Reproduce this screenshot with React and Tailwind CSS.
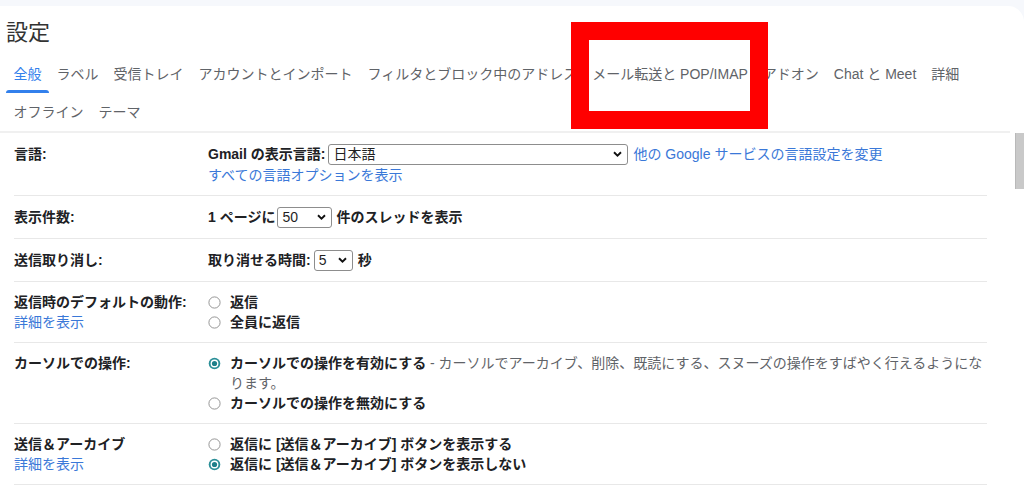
import React from 'react';

const tabs = [
  'ラベル',
  '受信トレイ',
  'アカウントとインポート',
  'フィルタとブロック中のアドレス',
  'メール転送と POP/IMAP',
  'アドオン',
  'Chat と Meet',
  '詳細',
  'オフライン',
  'テーマ',
];

const Select = ({ value, width }) => (
  <div
    className={`flex items-center justify-between h-[21px] border border-[#8d8d8d] rounded-[3px] pl-[4px] pr-[5px] bg-white font-normal text-[#1f1f1f] ${width}`}
  >
    <span className="leading-[19px]">{value}</span>
    <svg width="9" height="6" viewBox="0 0 9 6">
      <path d="M1 1.2l3.5 3.4L8 1.2" stroke="#111" strokeWidth="1.9" fill="none" />
    </svg>
  </div>
);

const Radio = ({ checked }) => (
  <svg width="13" height="13" viewBox="0 0 13 13" className="shrink-0">
    {checked ? (
      <>
        <circle cx="6.5" cy="6.5" r="5.8" fill="#2b8f98" />
        <circle cx="6.5" cy="6.5" r="3.9" fill="#fff" />
        <circle cx="6.5" cy="6.5" r="2.6" fill="#1d7f89" />
      </>
    ) : (
      <circle cx="6.5" cy="6.5" r="5.6" fill="#fff" stroke="#8a8a8a" strokeWidth="0.9" />
    )}
  </svg>
);

const Option = ({ checked, children }) => (
  <div className="flex items-center h-[20px]">
    <Radio checked={checked} />
    <span className="ml-[9px] font-bold text-[#202124] whitespace-nowrap">{children}</span>
  </div>
);

const Row = ({ label, labelLead = 'leading-[20px]', children }) => (
  <div className="flex ml-[14px] w-[973px] py-[10px] border-b border-[#e8e8e8]">
    <div className={`w-[194px] shrink-0 font-bold text-[#202124] ${labelLead}`}>{label}</div>
    <div className="flex-1 leading-[20px]">{children}</div>
  </div>
);

const Link = ({ children }) => <span className="text-[#3a78d8]">{children}</span>;

export default function App() {
  return (
    <div className="relative w-[1024px] h-[486px] overflow-hidden bg-[#f6f8fc] text-[14px] font-['Liberation_Sans','Noto_Sans_CJK_JP',sans-serif]">
      <div className="mt-[6px] h-[480px] bg-white rounded-tr-[16px] overflow-hidden">
        {/* title */}
        <div className="h-[49px] pl-[6px] pt-[13px] text-[22px] leading-[28px] text-[#333]">設定</div>

        {/* tabs */}
        <div className="flex flex-wrap w-[1000px] pl-[6px]">
          <div className="relative h-[38px] px-[7.5px] flex items-center text-[#3280ec]">
            全般
            <div className="absolute left-0 right-0 bottom-0 h-[3px] rounded-t-[3px] bg-[#3280ec]" />
          </div>
          {tabs.map((t) => (
            <div key={t} className="h-[38px] px-[7.5px] flex items-center text-[#5f6368] whitespace-nowrap">
              {t}
            </div>
          ))}
        </div>
        <div className="w-[1010px] h-[2px] bg-[#f0f0f0]" />

        {/* settings */}
        <Row label="言語:" labelLead="leading-[22px]">
          <div className="flex items-center h-[22px]">
            <span className="font-bold text-[#202124]">Gmail の表示言語:</span>
            <div className="ml-[3px]">
              <Select value="日本語" width="w-[300px]" />
            </div>
            <span className="ml-[5px]">
              <Link>他の Google サービスの言語設定を変更</Link>
            </span>
          </div>
          <Link>すべての言語オプションを表示</Link>
        </Row>

        <Row label="表示件数:" labelLead="leading-[22px]">
          <div className="flex items-center h-[22px] font-bold text-[#202124]">
            <span>1 ページに</span>
            <div className="ml-[2px]">
              <Select value="50" width="w-[55px]" />
            </div>
            <span className="ml-[4px]">件のスレッドを表示</span>
          </div>
        </Row>

        <Row label="送信取り消し:" labelLead="leading-[22px]">
          <div className="flex items-center h-[22px] font-bold text-[#202124]">
            <span>取り消せる時間:</span>
            <div className="ml-[3px]">
              <Select value="5" width="w-[39px]" />
            </div>
            <span className="ml-[5px]">秒</span>
          </div>
        </Row>

        <Row
          label={
            <>
              <div>返信時のデフォルトの動作:</div>
              <div className="font-normal">
                <Link>詳細を表示</Link>
              </div>
            </>
          }
        >
          <Option>返信</Option>
          <Option>全員に返信</Option>
        </Row>

        <Row label="カーソルでの操作:">
          <div className="flex items-start">
            <div className="h-[20px] flex items-center">
              <Radio checked />
            </div>
            <div className="ml-[9px] text-[#5f6368]">
              <div className="whitespace-nowrap">
                <span className="font-bold text-[#202124]">カーソルでの操作を有効にする</span> -
                カーソルでアーカイブ、削除、既読にする、スヌーズの操作をすばやく行えるようにな
              </div>
              <div>ります。</div>
            </div>
          </div>
          <Option>カーソルでの操作を無効にする</Option>
        </Row>

        <Row
          label={
            <>
              <div>送信＆アーカイブ</div>
              <div className="font-normal">
                <Link>詳細を表示</Link>
              </div>
            </>
          }
        >
          <Option>返信に [送信＆アーカイブ] ボタンを表示する</Option>
          <Option checked>返信に [送信＆アーカイブ] ボタンを表示しない</Option>
        </Row>
      </div>

      {/* scrollbar thumb */}
      <div className="absolute left-[1015px] top-[133px] w-[9px] h-[56px] bg-[#c9c9c9] border-l border-[#b9b9b9]" />

      {/* annotation box */}
      <div className="absolute left-[571px] top-[22px] w-[197px] h-[107px] border-[18px] border-[#ff0000]" />
    </div>
  );
}
